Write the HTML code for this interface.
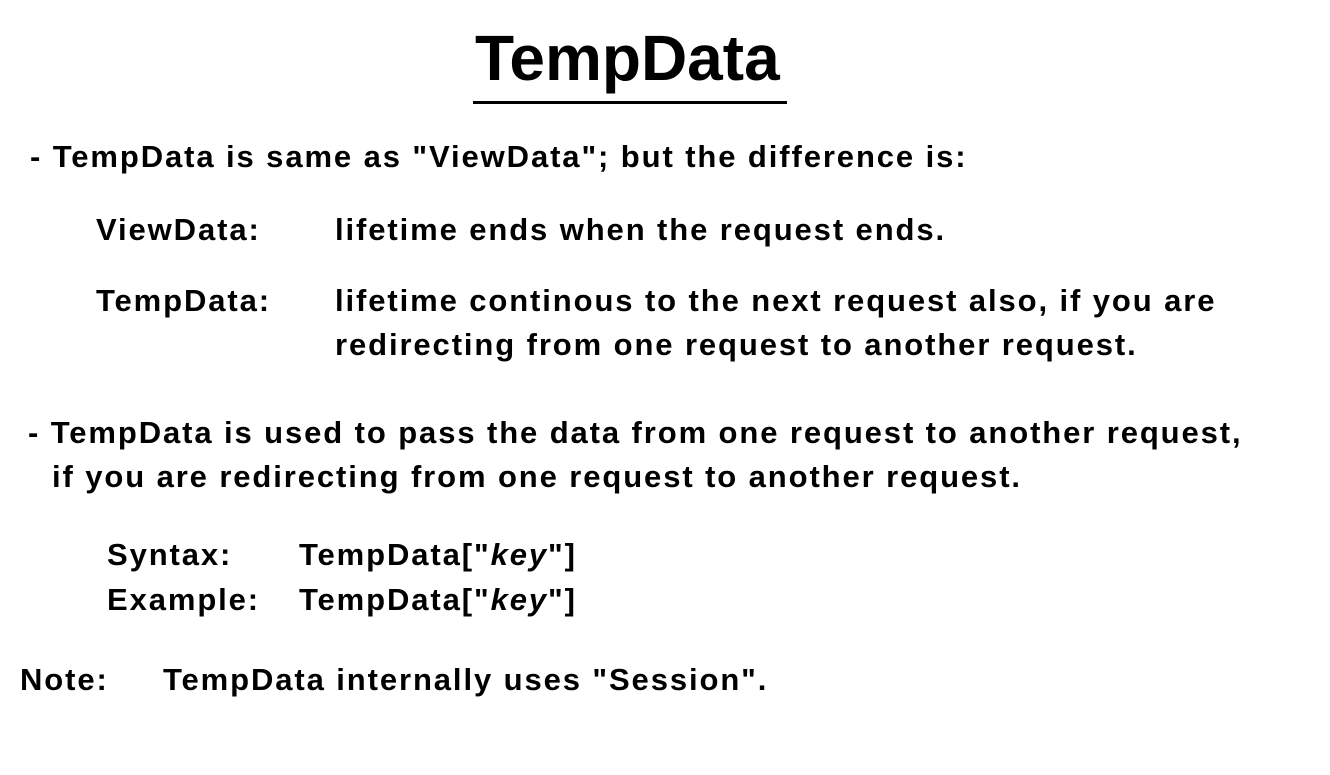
<!DOCTYPE html>
<html><head><meta charset="utf-8"><style>
html,body{margin:0;padding:0;background:#fff;}
body{width:1330px;height:775px;position:relative;overflow:hidden;font-family:"Liberation Sans",sans-serif;font-weight:bold;color:#000;}
.t{position:absolute;font-size:31px;line-height:30px;white-space:nowrap;letter-spacing:1.9px;}
#title{position:absolute;left:475px;top:26px;font-size:64px;line-height:64px;white-space:nowrap;}
#ul{position:absolute;left:473px;top:101px;width:314px;height:3px;background:#000;}
</style></head><body>
<div id="title">TempData</div>
<div id="ul"></div>
<div class="t" style="left:30px;top:142px">- TempData is same as "ViewData"; but the difference is:</div>
<div class="t" style="left:96px;top:215px">ViewData:</div>
<div class="t" style="left:335px;top:215px">lifetime ends when the request ends.</div>
<div class="t" style="left:96px;top:286px">TempData:</div>
<div class="t" style="left:335px;top:286px">lifetime continous to the next request also, if you are</div>
<div class="t" style="left:335px;top:330px">redirecting from one request to another request.</div>
<div class="t" style="left:28px;top:418px">- TempData is used to pass the data from one request to another request,</div>
<div class="t" style="left:52px;top:462px">if you are redirecting from one request to another request.</div>
<div class="t" style="left:107px;top:540px">Syntax:</div>
<div class="t" style="left:299px;top:540px">TempData["<i>key</i>"]</div>
<div class="t" style="left:107px;top:585px">Example:</div>
<div class="t" style="left:299px;top:585px">TempData["<i>key</i>"]</div>
<div class="t" style="left:20px;top:665px">Note:</div>
<div class="t" style="left:163px;top:665px">TempData internally uses "Session".</div>
</body></html>
